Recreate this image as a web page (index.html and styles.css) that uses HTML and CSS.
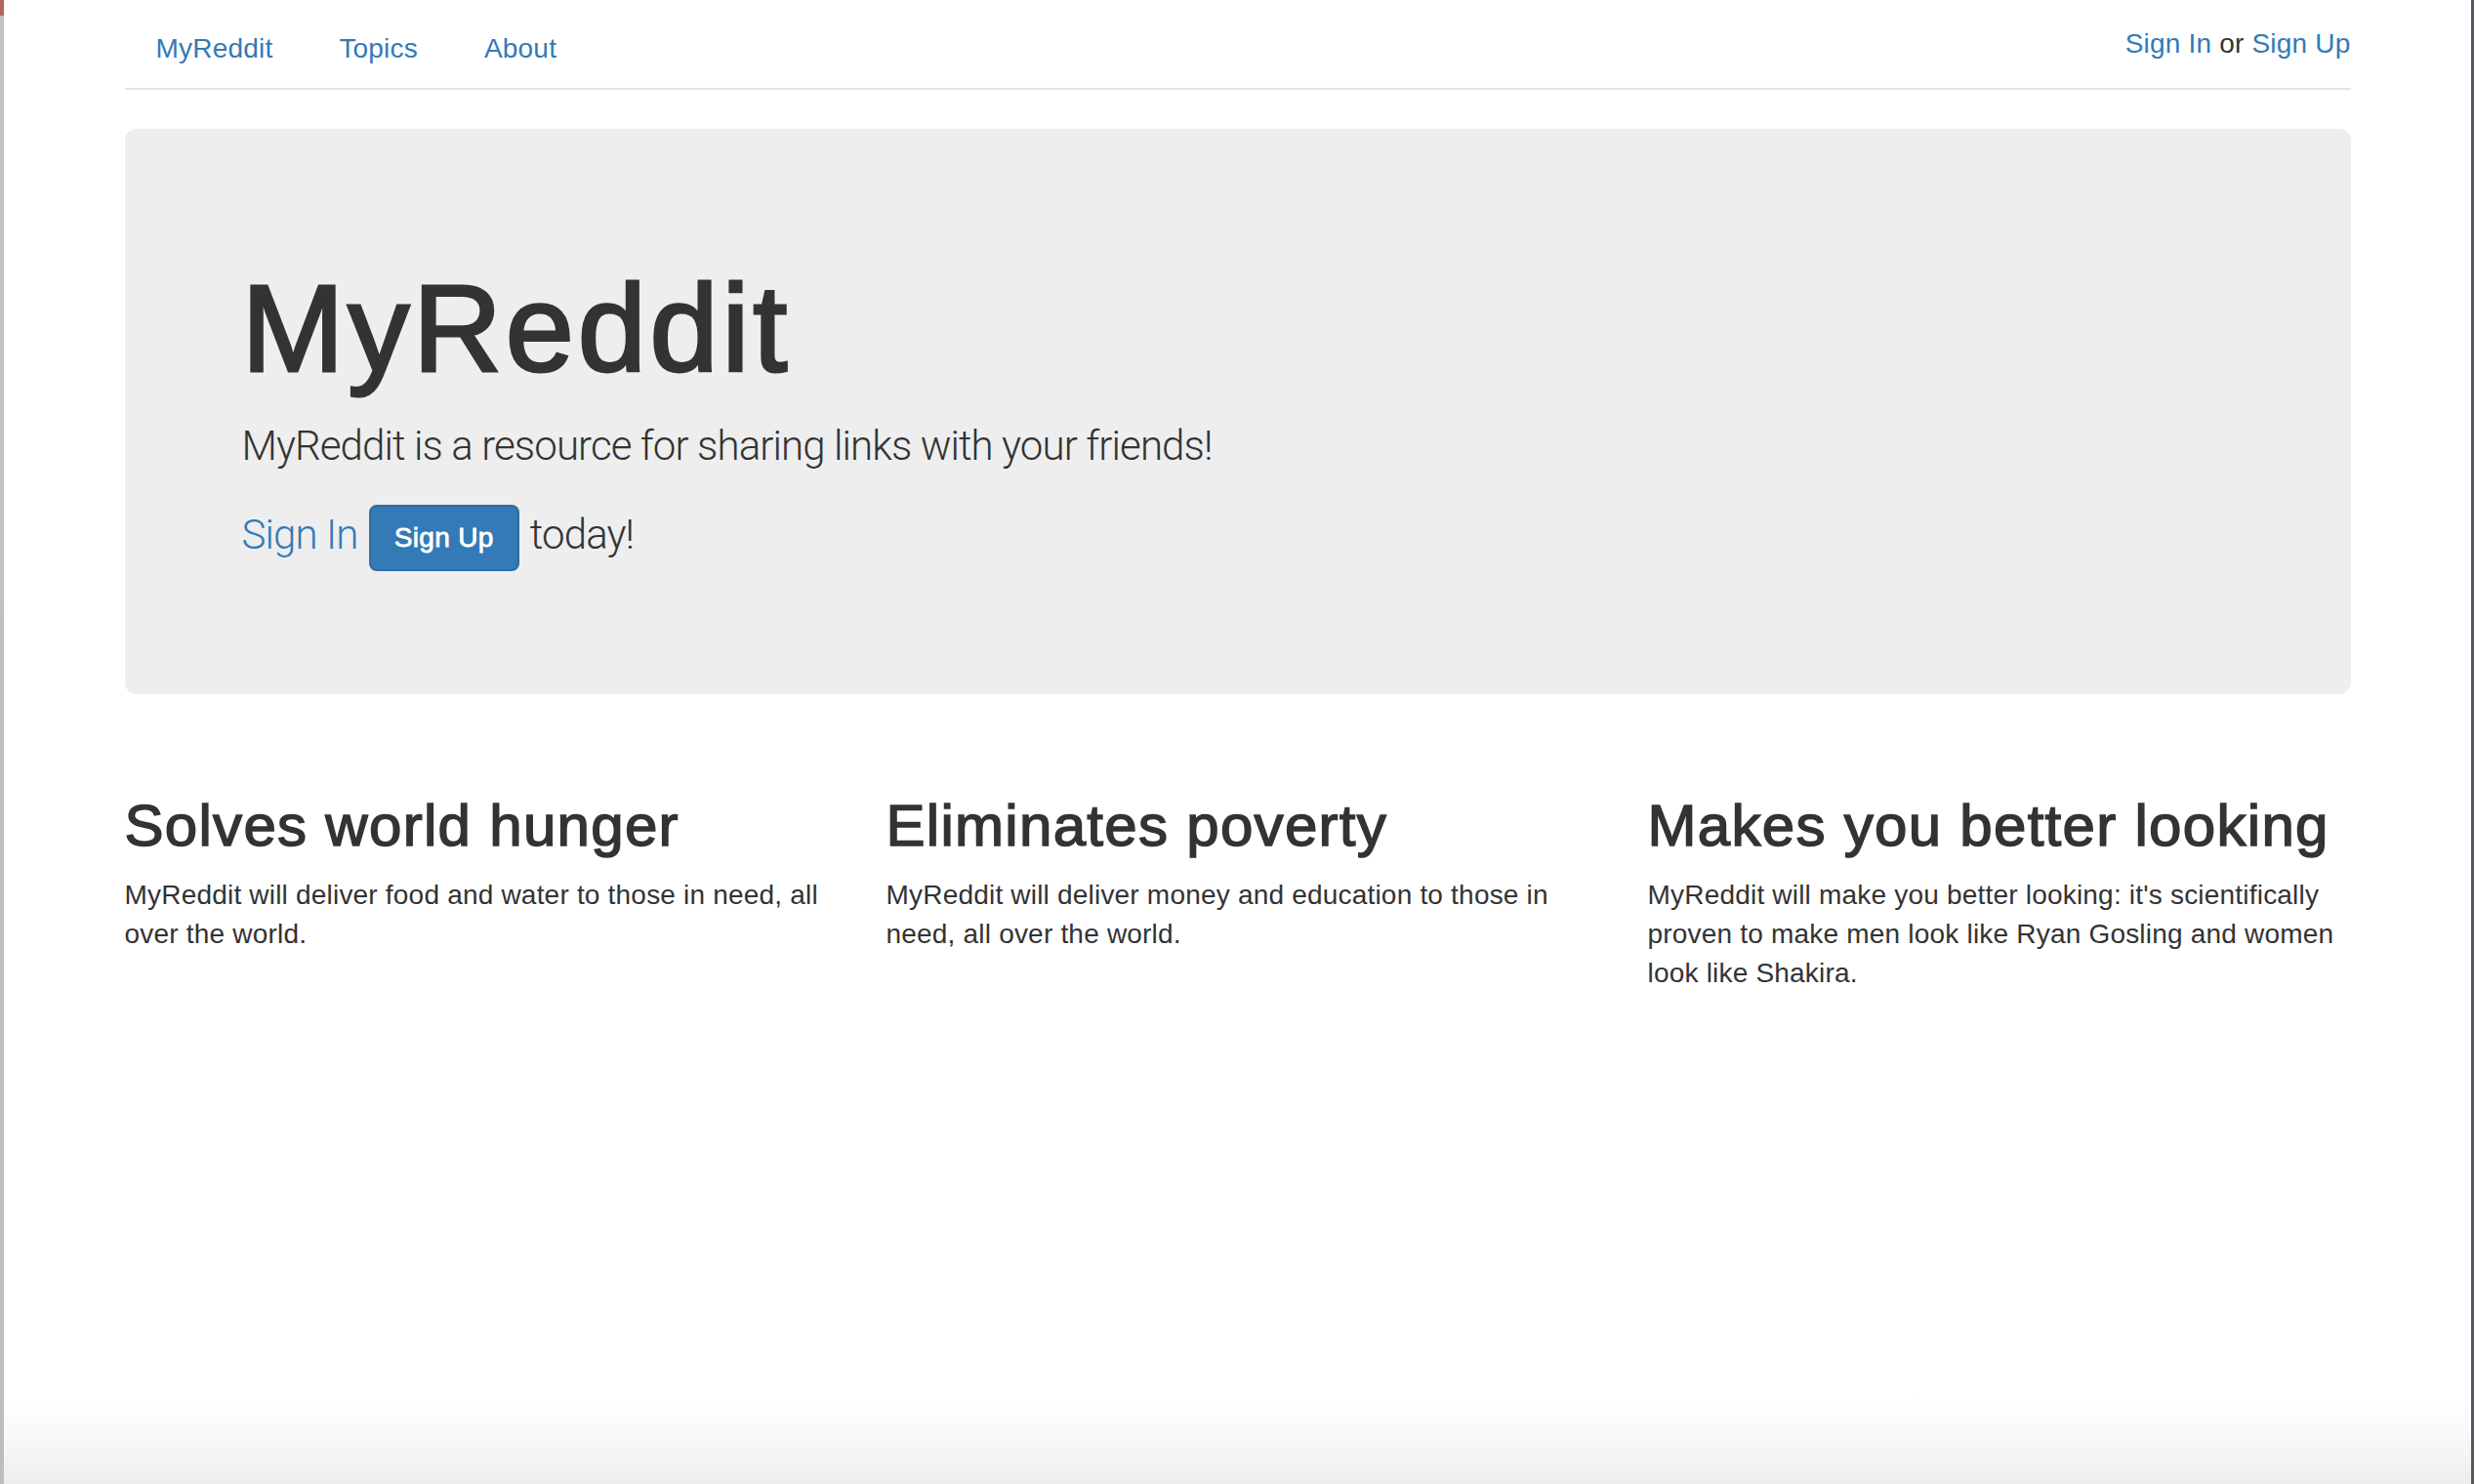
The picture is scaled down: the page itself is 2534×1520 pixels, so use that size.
FILE: index.html
```html
<!DOCTYPE html>
<html lang="en">
<head>
<meta charset="utf-8">
<title>MyReddit</title>
<link rel="stylesheet" href="styles.css">
</head>
<body>
<div class="edge-left"></div>
<div class="page">
  <div class="container">
    <header class="header">
      <ul class="nav">
        <li><a href="#">MyReddit</a></li>
        <li><a href="#">Topics</a></li>
        <li><a href="#">About</a></li>
      </ul>
      <p class="auth"><a href="#">Sign In</a> or <a href="#">Sign Up</a></p>
    </header>

    <section class="jumbotron">
      <h1>MyReddit</h1>
      <p class="lead">MyReddit is a resource for sharing links with your friends!</p>
      <p class="lead"><a href="#">Sign In</a> <a class="btn" href="#">Sign Up</a> today!</p>
    </section>

    <section class="features">
      <div class="feature">
        <h2>Solves world hunger</h2>
        <p>MyReddit will deliver food and water to those in need, all over the world.</p>
      </div>
      <div class="feature">
        <h2>Eliminates poverty</h2>
        <p>MyReddit will deliver money and education to those in need, all over the world.</p>
      </div>
      <div class="feature">
        <h2>Makes you better looking</h2>
        <p>MyReddit will make you better looking: it's scientifically proven to make men look like Ryan Gosling and women look like Shakira.</p>
      </div>
    </section>
  </div>
  <div class="page-shade"></div>
</div>
<div class="edge-right"></div>
</body>
</html>
```
FILE: styles.css
```css
html, body {
  margin: 0;
  padding: 0;
  height: 100%;
}

body {
  display: flex;
  font-family: "Liberation Sans", Arial, sans-serif;
  font-size: 28px;
  line-height: 40px;
  letter-spacing: 0.2px;
  color: #333;
  background: #fff;
}

.edge-left {
  width: 4px;
  flex: none;
  background: linear-gradient(to bottom, #b0675d 0, #b0675d 16px, #c2c2c2 16px, #bdbdbd 100%);
}

.edge-right {
  width: 3px;
  flex: none;
  background: #56566a;
}

.page {
  flex: 1;
  display: flex;
  flex-direction: column;
  background: #fff;
  min-width: 0;
}

.container {
  width: 2340px;
  box-sizing: border-box;
  margin: 0 auto;
  padding: 0 30px;
}

a {
  color: #337ab7;
  text-decoration: none;
}

/* header */
.header {
  display: flex;
  justify-content: space-between;
  align-items: flex-start;
  padding-top: 10px;
  border-bottom: 2px solid #e5e5e5;
  margin-bottom: 40px;
}

.nav {
  display: flex;
  list-style: none;
  margin: 0;
  padding: 0;
}

.nav li + li {
  margin-left: 4px;
}

.nav a {
  display: block;
  padding: 20px 32px;
  font-size: 28px;
  line-height: 40px;
}

.auth {
  margin: 15px 0 0;
  font-size: 28px;
  line-height: 40px;
}

/* jumbotron */
.jumbotron {
  background: #eee;
  border-radius: 12px;
  padding: 96px 120px;
  margin-bottom: 60px;
}

.jumbotron h1 {
  font-size: 126px;
  font-weight: 400;
  line-height: 1.1;
  letter-spacing: 3.8px;
  -webkit-text-stroke: 3px #333;
  margin: 40px 0 20px;
  color: #333;
}

.lead {
  font-family: "Roboto", "Liberation Sans", sans-serif;
  font-size: 42px;
  font-weight: 300;
  line-height: 60px;
  letter-spacing: -0.9px;
  margin: 0 0 30px;
}

.btn {
  display: inline-block;
  font-family: "Liberation Sans", Arial, sans-serif;
  font-size: 28px;
  font-weight: 400;
  line-height: 40px;
  letter-spacing: 0.3px;
  -webkit-text-stroke: 0.8px #fff;
  padding: 12px 24px;
  margin: 0 2px;
  color: #fff;
  background: #337ab7;
  border: 2px solid #2e6da4;
  border-radius: 8px;
  vertical-align: middle;
}

/* features */
.features {
  display: grid;
  grid-template-columns: repeat(3, 1fr);
  column-gap: 60px;
}

.feature h2 {
  font-size: 60px;
  font-weight: 400;
  line-height: 1.1;
  letter-spacing: 1.3px;
  -webkit-text-stroke: 1.5px #333;
  margin: 42px 0 18px;
}

.feature p {
  margin: 0 0 20px;
}

.page-shade {
  margin-top: auto;
  height: 90px;
  flex: none;
  background: linear-gradient(to bottom, #fff 0%, #f8f8f8 50%, #ededed 100%);
}
```
